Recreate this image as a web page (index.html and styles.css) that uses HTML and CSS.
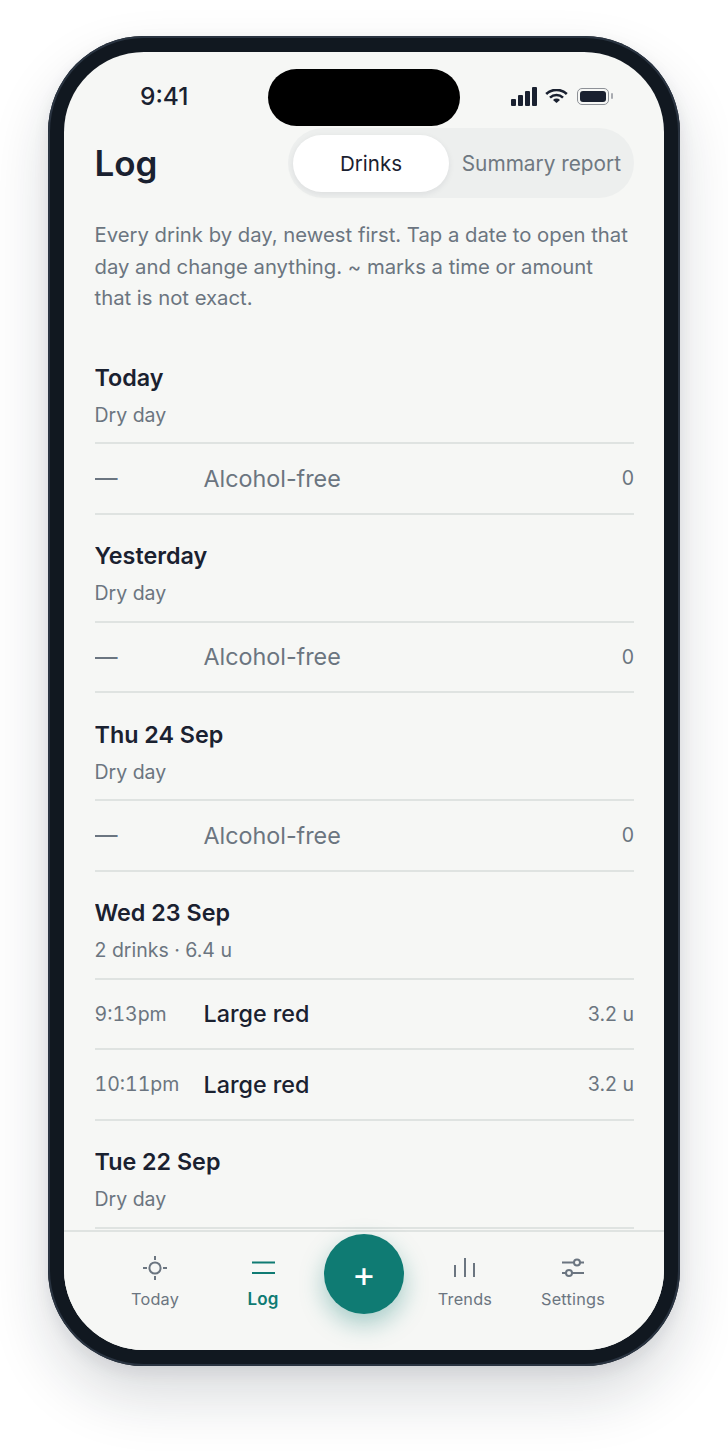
FILE: index.html
```html
<!DOCTYPE html>
<html lang="en">
<head>
    <meta charset="UTF-8">
    <meta name="viewport" content="width=device-width, initial-scale=1.0">
    <title>Log</title>
    <link rel="stylesheet" href="styles.css">
</head>
<body>
    <div class="phone">
        <div class="screen">
            <div class="island"></div>
            <div class="status">
                <span class="clock">9:41</span>
                <div class="statusIcons">
                    <svg width="26" height="19" viewBox="0 0 26 19"><rect x="0" y="12" width="5" height="7" rx="1"/><rect x="7" y="8" width="5" height="11" rx="1"/><rect x="14" y="4" width="5" height="15" rx="1"/><rect x="21" y="0" width="5" height="19" rx="1"/></svg>
                    <svg width="23" height="14" viewBox="0 0 23 14"><path d="M1.2 5A15 15 0 0 1 21.8 5M5 8.6a9.6 9.6 0 0 1 13 0" fill="none" stroke="#1a2130" stroke-width="2.6"/><path d="M8 11a5 5 0 0 1 7 0l-3.500 3z"/></svg>
                    <div class="battery"><i></i></div>
                </div>
            </div>
            <div class="head">
                <h1>Log</h1>
                <div class="seg">
                    <div class="segOn">Drinks</div>
                    <div class="segOff">Summary report</div>
                </div>
            </div>
            <p class="intro">Every drink by day, newest first. Tap a date to open that day and change anything. ~ marks a time or amount that is not exact.</p>
            <div class="days">
                <section class="day">
                    <h2>Today</h2>
                    <div class="sub">Dry day</div>
                    <div class="row free"><span class="time">—</span><span class="name">Alcohol-free</span><span class="units">0</span></div>
                </section>
                <section class="day">
                    <h2>Yesterday</h2>
                    <div class="sub">Dry day</div>
                    <div class="row free"><span class="time">—</span><span class="name">Alcohol-free</span><span class="units">0</span></div>
                </section>
                <section class="day">
                    <h2>Thu 24 Sep</h2>
                    <div class="sub">Dry day</div>
                    <div class="row free"><span class="time">—</span><span class="name">Alcohol-free</span><span class="units">0</span></div>
                </section>
                <section class="day">
                    <h2>Wed 23 Sep</h2>
                    <div class="sub">2 drinks · 6.4 u</div>
                    <div class="row"><span class="time">9:13pm</span><span class="name">Large red</span><span class="units">3.2 u</span></div>
                    <div class="row"><span class="time">10:11pm</span><span class="name">Large red</span><span class="units">3.2 u</span></div>
                </section>
                <section class="day">
                    <h2>Tue 22 Sep</h2>
                    <div class="sub">Dry day</div>
                </section>
            </div>
            <nav class="tabs">
                <div class="tab">
                    <svg width="26" height="26" viewBox="0 0 26 26"><circle cx="13" cy="13" r="5.600"/><path d="M13 1v4M13 21v4M1 13h4M21 13h4"/></svg>
                    <span>Today</span>
                </div>
                <div class="tab active">
                    <svg width="26" height="26" viewBox="0 0 26 26"><path d="M2 7.500h23M2 18h23"/></svg>
                    <span>Log</span>
                </div>
                <div class="fabCell"><div class="fab">+</div></div>
                <div class="tab">
                    <svg width="26" height="26" viewBox="0 0 26 26"><path d="M3 10v12M13 3v19M22 8v14"/></svg>
                    <span>Trends</span>
                </div>
                <div class="tab">
                    <svg width="26" height="26" viewBox="0 0 26 26"><path d="M2 7.500h22M2 18h22"/><circle class="dot" cx="17" cy="7.500" r="3"/><circle class="dot" cx="9" cy="18" r="3"/></svg>
                    <span>Settings</span>
                </div>
            </nav>
        </div>
    </div>
</body>
</html>
```

FILE: styles.css
```css
*{
    margin: 0;
    padding: 0;
    box-sizing: border-box;
}
body{
    background: #fff;
    padding: 36px 48px 85px;
    font-family: "Inter", "Noto Sans", sans-serif;
    overflow: hidden;
}
.phone{
    width: 632px;
    height: 1330px;
    padding: 16px;
    border-radius: 96px;
    background: #111820;
    box-shadow: inset 0 0 0 2px #2a3441, 0 30px 60px rgba(20,30,45,.16), 0 6px 16px rgba(20,30,45,.08);
}
.screen{
    position: relative;
    display: flex;
    flex-direction: column;
    height: 100%;
    border-radius: 80px;
    background: #f6f7f5;
    overflow: hidden;
}
.island{
    position: absolute;
    top: 17px;
    left: 204px;
    width: 192px;
    height: 57px;
    border-radius: 29px;
    background: #000;
}
.status{
    display: flex;
    flex: none;
    justify-content: space-between;
    align-items: center;
    height: 76px;
    padding: 12px 55px 0 76px;
}
.clock{
    font-size: 24.500px;
    font-weight: 500;
    color: #1a2130;
}
.statusIcons{
    display: flex;
    align-items: center;
    gap: 8px;
}
.statusIcons svg{
    fill: #1a2130;
}
.battery{
    position: relative;
    width: 32px;
    height: 17px;
    margin-left: 1px;
    padding: 2px;
    border: 1.500px solid #8d9197;
    border-radius: 5px;
}
.battery i{
    display: block;
    height: 100%;
    border-radius: 3px;
    background: #1a2130;
}
.battery:after{
    content: "";
    position: absolute;
    top: 4px;
    right: -5px;
    width: 2px;
    height: 6px;
    border-radius: 1px;
    background: #a8abb0;
}
.head{
    display: flex;
    flex: none;
    justify-content: space-between;
    align-items: center;
    padding: 0 30px 0 30.500px;
}
h1{
    font-size: 35px;
    font-weight: 600;
    color: #1a2130;
}
.seg{
    display: flex;
    align-items: center;
    width: 346px;
    height: 70px;
    padding: 0 13px 0 5px;
    border-radius: 35px;
    background: #edefee;
}
.segOn{
    width: 156px;
    height: 57px;
    border-radius: 29px;
    background: #fff;
    box-shadow: 0 2px 6px rgba(20,30,45,.08);
    color: #1a2130;
    font-size: 20.500px;
    font-weight: 400;
    line-height: 57px;
    text-align: center;
}
.segOff{
    flex: 1;
    color: #6f7881;
    font-size: 20.800px;
    font-weight: 400;
    text-align: right;
    white-space: nowrap;
}
.intro{
    flex: none;
    padding: 21px 30px 0 30.500px;
    color: #6b7580;
    font-size: 20.300px;
    line-height: 31.500px;
}
.days{
    flex: 1;
    min-height: 0;
    margin: 22.500px 30px 0 30.500px;
    overflow: hidden;
}
.day{
    padding-top: 23.500px;
}
h2{
    color: #1a2130;
    font-size: 23.300px;
    font-weight: 600;
    line-height: 36px;
}
.sub{
    height: 48.500px;
    padding-top: 4px;
    border-bottom: 2px solid #dfe3e1;
    color: #6b7580;
    font-size: 19.500px;
    line-height: 30px;
}
.row{
    display: flex;
    align-items: center;
    height: 70.500px;
    border-bottom: 2px solid #dfe3e1;
}
.time{
    flex: none;
    width: 109px;
    color: #6b7580;
    font-size: 19.500px;
    font-variant-numeric: tabular-nums;
}
.name{
    flex: 1;
    color: #1a2130;
    font-size: 23.300px;
    font-weight: 500;
}
.units{
    color: #6b7580;
    font-size: 19.500px;
}
.free .name{
    color: #6b7580;
    font-weight: 400;
}
.free .time{
    font-size: 23px;
}
.tabs{
    display: grid;
    flex: none;
    grid-template-columns: 108px 108px 94px 108px 108px;
    height: 120px;
    padding: 0 37px;
    border-top: 2px solid #dfe3e1;
    background: #f6f7f5;
}
.tab{
    display: flex;
    flex-direction: column;
    align-items: center;
    padding-top: 23px;
    color: #6b7580;
    font-size: 16.300px;
    font-weight: 400;
    letter-spacing: .2px;
}
.tab svg{
    margin-bottom: 8px;
    fill: none;
    stroke: #6b7580;
    stroke-width: 2;
}
.tab .dot{
    fill: #f6f7f5;
}
.active{
    color: #0f7b73;
    font-size: 17px;
    font-weight: 600;
}
.active svg{
    stroke: #0f7b73;
}
.fabCell{
    display: flex;
    justify-content: center;
    padding-top: 2px;
}
.fab{
    flex: none;
    width: 80px;
    height: 80px;
    border-radius: 50%;
    background: #0f7b73;
    box-shadow: 0 10px 24px rgba(15,123,115,.35);
    color: #fff;
    font-size: 36px;
    font-weight: 400;
    line-height: 80px;
    text-align: center;
}
```
